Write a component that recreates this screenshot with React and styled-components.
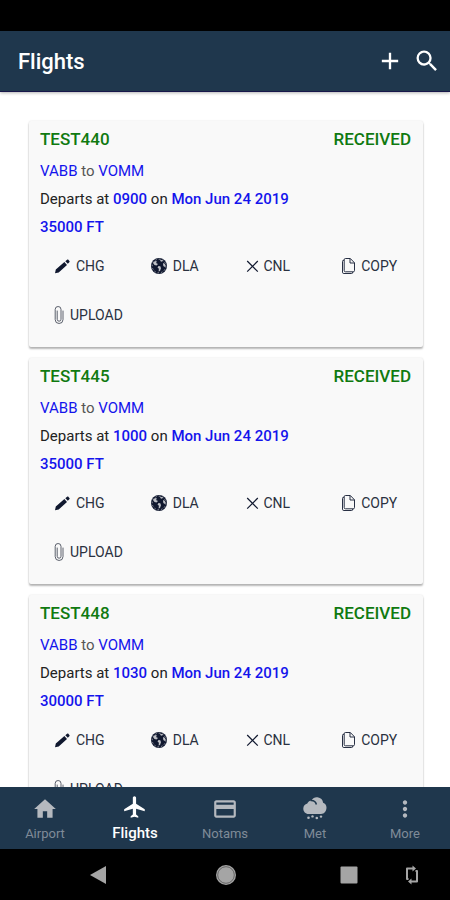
import React, { useState } from 'react'

import styled, { createGlobalStyle } from 'styled-components'
import {
  MdAdd,
  MdSearch,
  MdHome,
  MdFlight,
  MdCreditCard,
  MdMoreVert,
} from 'react-icons/md'

const GlobalStyle = createGlobalStyle`
  * {
    box-sizing: border-box;
  }
  body {
    margin: 0;
    background: #ffffff;
    font-family: Roboto, 'Liberation Sans', sans-serif;
  }
  button {
    font-family: inherit;
    border: 0;
    padding: 0;
    background: none;
    cursor: pointer;
  }
`

const Screen = styled.div`
  display: flex;
  flex-direction: column;
  width: 100%;
  height: 100vh;
`
const StatusBar = styled.div`
  flex: none;
  height: 31px;
  background: #000000;
`
const Header = styled.header`
  display: flex;
  flex: none;
  align-items: center;
  justify-content: space-between;
  height: 61px;
  padding: 0 9px 0 18px;
  background: #1f374d;
  border-bottom: 1px solid #17174a;
  box-shadow: 0 1px 3px rgba(0, 0, 0, 0.3);
  z-index: 1;
`
const Title = styled.h1`
  margin: 0;
  font-size: 22px;
  font-weight: 500;
  color: #ffffff;
`
const Tools = styled.div`
  display: flex;
  gap: 9px;
`
const IconButton = styled.button`
  display: flex;
  color: #ffffff;
  font-size: 28px;
`
const List = styled.main`
  display: flex;
  flex: 1;
  flex-direction: column;
  gap: 11px;
  min-height: 0;
  padding: 29px 27px 29px 29px;
  overflow-y: auto;
  scrollbar-width: none;
`
const Card = styled.article`
  flex: none;
  padding: 6px 0 8px 11px;
  background: #f9f9f9;
  border-radius: 2px;
  box-shadow: 0 2px 2px rgba(0, 0, 0, 0.28), 0 0 2px rgba(0, 0, 0, 0.12);
`
const CardHead = styled.div`
  display: flex;
  justify-content: space-between;
  margin-bottom: 6px;
  padding-right: 12px;
  font-size: 17px;
  font-weight: 500;
  line-height: 24px;
  color: #107a10;
`
const CardTitle = styled.h2`
  margin: 0;
  font-size: inherit;
  font-weight: inherit;
`
const Line = styled.p`
  margin: 0;
  font-size: 15px;
  line-height: 28px;
  color: ${(props) => (props.$muted ? '#555555' : '#222222')};
`
const Value = styled.span`
  color: #1414ec;
  font-weight: ${(props) => (props.$strong ? 500 : 400)};
`
const Actions = styled.div`
  display: grid;
  grid-template-columns: repeat(4, 1fr);
`
const Action = styled.button`
  display: flex;
  align-items: center;
  gap: 5px;
  height: 49px;
  padding-left: 14px;
  font-size: 14px;
  color: #2a3140;
  white-space: nowrap;
  & svg {
    flex: none;
    color: #10182f;
  }
`
const Tabs = styled.nav`
  display: grid;
  flex: none;
  grid-template-columns: repeat(5, 1fr);
  height: 62px;
  background: #1f374d;
  z-index: 1;
`
const Tab = styled.a`
  display: flex;
  flex-direction: column;
  align-items: center;
  gap: 4px;
  padding-top: ${(props) => (props.$active ? 7 : 9)}px;
  font-size: ${(props) => (props.$active ? 15 : 13)}px;
  font-weight: ${(props) => (props.$active ? 500 : 400)};
  line-height: ${(props) => (props.$active ? 18 : 16)}px;
  text-decoration: none;
  color: ${(props) => (props.$active ? '#ffffff' : '#7f8b98')};
  & svg {
    width: 26px;
    height: 26px;
    color: ${(props) => (props.$active ? '#ffffff' : '#b5b9bf')};
  }
`
const SystemBar = styled.footer`
  display: grid;
  flex: none;
  grid-template-columns: 1fr 1fr 1fr;
  align-items: center;
  justify-items: center;
  height: 51px;
  padding: 0 31px 0 34px;
  background: #000000;
`
const SystemButton = styled.button`
  display: flex;
`
const SystemGroup = styled.div`
  display: flex;
  gap: 47px;
  justify-self: end;
`

const PencilIcon = () => (
  <svg width="17" height="18" viewBox="0 0 17 18">
    <path
      d="M1 16.200l.8-3.700 8.600-7.400 2.600 2.800-8.300 7.600zM11.300 4.300l1.800-1.500c.5-.4 1-.3 1.400.1l.9 1c.4.5.3 1-.1 1.400l-1.500 1.500z"
      fill="currentColor"
    />
  </svg>
)

const GlobeIcon = () => (
  <svg width="18" height="18" viewBox="0 0 18 18">
    <circle cx="9" cy="9" r="8" fill="currentColor" />
    <path
      d="M3 6l2-2 2 .5L6 6l2 1-1.500 1.500-2-.5zM10 2.500l3 1-1 1.200-1.500-.4zM13 6l2 1 .6 2-1.400 1-1-1.600zM8.500 9l1.800.3.7 2-1 2.700-1.400.4.3-2.600-1.400-1.300z"
      fill="#f9f9f9"
      opacity="0.75"
    />
    <circle
      cx="9"
      cy="9"
      r="6.800"
      fill="none"
      stroke="#f9f9f9"
      strokeWidth="0.800"
      strokeDasharray="1.500 2"
      opacity="0.700"
    />
  </svg>
)

const CloseIcon = () => (
  <svg width="13" height="18" viewBox="0 0 13 18">
    <path
      d="M1.200 4l10.600 10.600M11.800 4L1.200 14.600"
      stroke="currentColor"
      strokeWidth="1.200"
      fill="none"
    />
  </svg>
)

const CopyIcon = () => (
  <svg width="15" height="18" viewBox="0 0 15 18">
    <g
      stroke="currentColor"
      strokeWidth="0.900"
      fill="none"
      strokeLinejoin="round"
    >
      <path d="M4.500 1.500h4.800l4.200 4.300v7.700a1.300 1.300 0 0 1-1.300 1.300H4.500a1.300 1.300 0 0 1-1.300-1.300V2.800a1.300 1.300 0 0 1 1.300-1.300z" />
      <path d="M9 1.700v4.300h4.300" />
      <path d="M3 3.200a1.300 1.300 0 0 0-1.500 1.300v10.700a1.300 1.300 0 0 0 1.300 1.300h7.700a1.300 1.300 0 0 0 1.300-1.500" />
    </g>
  </svg>
)

const ClipIcon = () => (
  <svg width="11" height="20" viewBox="0 0 11 20">
    <path
      d="M3.200 6v8.300a1.900 1.900 0 0 0 3.800 0V4.400a2.900 2.900 0 0 0-5.800 0v10.200a3.900 3.900 0 0 0 7.800 0V6"
      stroke="#4a4f5c"
      strokeWidth="0.900"
      fill="none"
      strokeLinecap="round"
    />
  </svg>
)

const RainIcon = () => (
  <svg viewBox="0 0 26 26">
    <g fill="currentColor">
      <path d="M9.500 4.200C11 2 13 1 15.500 1.300c3.400.4 5.400 2.700 5.600 5.500 2.100.8 3.400 2.500 3.400 4.700 0 3.600-2.300 6.500-5.500 6.500H6.500C3.500 18 1.300 15.600 1.300 12.500c0-2.500 1.700-4.600 4-5.100.6-1.500 2.100-2.600 4.200-3.200z" />
      <circle cx="6.500" cy="21.800" r="1.300" />
      <circle cx="10.500" cy="20.400" r="1.200" />
      <circle cx="14.800" cy="22" r="1.300" />
      <circle cx="19" cy="20.600" r="1.200" />
    </g>
    <path
      d="M8.500 4.500c2.800-.3 5.200 1.200 5.900 4"
      stroke="#1f374d"
      strokeWidth="1.500"
      fill="none"
    />
  </svg>
)

const BackShape = () => (
  <svg width="18" height="20" viewBox="0 0 18 20">
    <path d="M17 1v18L1 10z" fill="#a5a5a5" />
  </svg>
)

const HomeShape = () => (
  <svg width="22" height="22" viewBox="0 0 22 22">
    <circle cx="11" cy="11" r="10" fill="#a5a5a5" />
    <circle cx="11" cy="11" r="8.300" fill="none" stroke="#666666" />
  </svg>
)

const RecentShape = () => (
  <svg width="18" height="20" viewBox="0 0 18 20">
    <rect x="0.500" y="1.500" width="17" height="17" rx="1" fill="#a5a5a5" />
  </svg>
)

const RotateShape = () => (
  <svg width="14" height="20" viewBox="0 0 14 20">
    <g stroke="#a5a5a5" strokeWidth="2" fill="none" strokeLinejoin="round">
      <path d="M3.500 14H2V3.500h6" />
      <path d="M10.500 6H12v10.500H6" />
    </g>
    <path d="M7.500 0.500v6l3.500-3zM6.500 13.500v6l-3.500-3z" fill="#a5a5a5" />
  </svg>
)

const flights = [
  { id: 'TEST440', from: 'VABB', to: 'VOMM', time: '0900', level: '35000 FT' },
  { id: 'TEST445', from: 'VABB', to: 'VOMM', time: '1000', level: '35000 FT' },
  { id: 'TEST448', from: 'VABB', to: 'VOMM', time: '1030', level: '30000 FT' },
]

const actions = [
  { label: 'CHG', icon: <PencilIcon /> },
  { label: 'DLA', icon: <GlobeIcon /> },
  { label: 'CNL', icon: <CloseIcon /> },
  { label: 'COPY', icon: <CopyIcon /> },
  { label: 'UPLOAD', icon: <ClipIcon /> },
]

const tabs = [
  { label: 'Airport', icon: <MdHome /> },
  { label: 'Flights', icon: <MdFlight /> },
  { label: 'Notams', icon: <MdCreditCard /> },
  { label: 'Met', icon: <RainIcon /> },
  { label: 'More', icon: <MdMoreVert /> },
]

const FlightCard = ({ flight }) => (
  <Card>
    <CardHead>
      <CardTitle>{flight.id}</CardTitle>
      <span>RECEIVED</span>
    </CardHead>
    <Line $muted>
      <Value>{flight.from}</Value> to <Value>{flight.to}</Value>
    </Line>
    <Line>
      Departs at <Value $strong>{flight.time}</Value> on{' '}
      <Value $strong>Mon Jun 24 2019</Value>
    </Line>
    <Line>
      <Value $strong>{flight.level}</Value>
    </Line>
    <Actions>
      {actions.map((action) => (
        <Action key={action.label} type="button">
          {action.icon}
          <span>{action.label}</span>
        </Action>
      ))}
    </Actions>
  </Card>
)

const App = () => {
  const [active, setActive] = useState('Flights')

  return (
    <>
      <GlobalStyle />
      <Screen>
        <StatusBar />
        <Header>
          <Title>Flights</Title>
          <Tools>
            <IconButton type="button" aria-label="Add flight">
              <MdAdd />
            </IconButton>
            <IconButton type="button" aria-label="Search">
              <MdSearch />
            </IconButton>
          </Tools>
        </Header>
        <List>
          {flights.map((flight) => (
            <FlightCard key={flight.id} flight={flight} />
          ))}
        </List>
        <Tabs>
          {tabs.map((tab) => (
            <Tab
              key={tab.label}
              href={`#${tab.label}`}
              $active={tab.label === active}
              onClick={() => setActive(tab.label)}
            >
              {tab.icon}
              <span>{tab.label}</span>
            </Tab>
          ))}
        </Tabs>
        <SystemBar>
          <SystemButton type="button" aria-label="Back">
            <BackShape />
          </SystemButton>
          <SystemButton type="button" aria-label="Home">
            <HomeShape />
          </SystemButton>
          <SystemGroup>
            <SystemButton type="button" aria-label="Recent apps">
              <RecentShape />
            </SystemButton>
            <SystemButton type="button" aria-label="Rotate">
              <RotateShape />
            </SystemButton>
          </SystemGroup>
        </SystemBar>
      </Screen>
    </>
  )
}

export default App
